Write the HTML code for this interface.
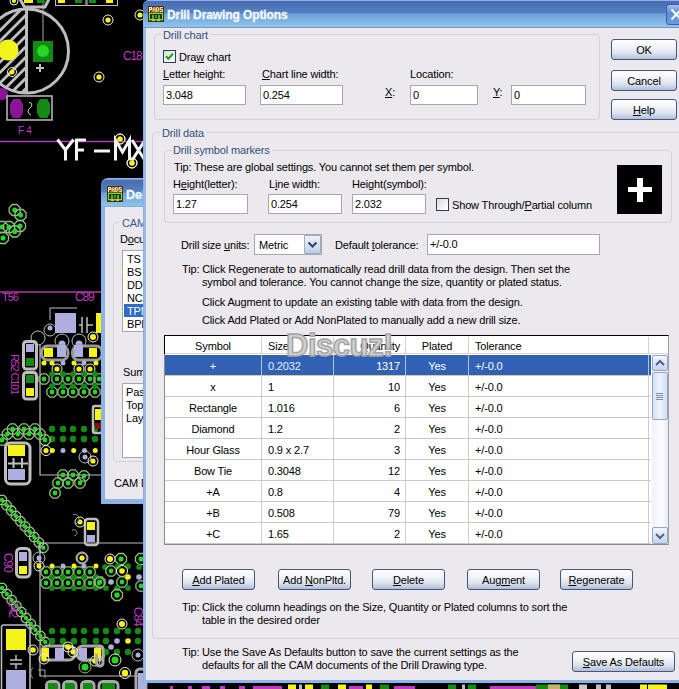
<!DOCTYPE html><html><head><meta charset="utf-8"><style>
*{margin:0;padding:0;box-sizing:content-box}
html,body{width:679px;height:689px;overflow:hidden;background:#000}
body{position:relative;font-family:"Liberation Sans",sans-serif}
.t{position:absolute;font-size:11px;line-height:13px;letter-spacing:-0.15px;white-space:nowrap;color:#000}
.t u{text-decoration:underline;text-underline-offset:1px}
.ed{position:absolute;background:#fff;border:1px solid #A7A6AA}
.btn{position:absolute;border:1px solid #44587E;border-radius:3px;background:linear-gradient(#FFFFFF 0%,#F6F7FA 30%,#DCE2EE 70%,#AFBDD8 100%)}
.bt{text-align:center}
.grp{position:absolute;border:1px solid #D3D1D7;border-radius:4px}
.glab{background:#EBE9ED;color:#34507E}

.icon{position:absolute;width:16px;height:16px;background:#8A5A1A;border-radius:1px}
.icon::before{content:"PADS";position:absolute;left:0;top:0;width:16px;font:bold 6px/7px 'Liberation Sans';color:#FFE9A8;text-align:center;letter-spacing:-0.3px}
.icon::after{content:"";position:absolute;left:2px;top:8px;width:12px;height:6px;background:#3FA03F;border:0 solid #1E5F1E}
</style></head><body>
<svg style="position:absolute;left:0;top:0" width="679" height="689"><defs><clipPath id="lh"><rect x="-20" y="0" width="46" height="100"/></clipPath><clipPath id="circ"><circle cx="26.5" cy="51" r="42"/></clipPath></defs><g clip-path="url(#circ)"><g clip-path="url(#lh)"><path d="M-20,50.5 L40,-9.5 M-20,61 L40,1 M-20,71.5 L40,11.5 M-20,82 L40,22 M-20,92.5 L40,32.5 M-20,103 L40,43 M-20,113.5 L40,53.5 M-20,124 L40,64 M-20,134.5 L40,74.5 M-20,145 L40,85 " stroke="#BEBEBE" stroke-width="3"/></g></g><circle cx="26.5" cy="51" r="42" fill="none" stroke="#BEBEBE" stroke-width="3"/><path d="M26.5,6 L26.5,94" stroke="#BEBEBE" stroke-width="3" fill="none"/><circle cx="8" cy="50" r="10.5" fill="#F4F41A"/><circle cx="12" cy="72" r="4.5" fill="none" stroke="#F2F2CC" stroke-width="1"/><circle cx="12" cy="72" r="2.5" fill="#F4F41A"/><rect x="33" y="41" width="20" height="21" rx="0" fill="#138A13"/><circle cx="43" cy="51" r="6" fill="#22D822"/><path d="M36,68 L44,68 M40,64 L40,72" stroke="#BEBEBE" stroke-width="2" fill="none"/><path d="M43,3 L43,41" stroke="#A8A8A8" stroke-width="1" fill="none"/><path d="M20,-1 L24.5,7 L45,7 L49,-1" stroke="#BEBEBE" stroke-width="3" fill="none"/><rect x="24" y="0" width="9" height="3" rx="0" fill="#F4F41A"/><rect x="37" y="0" width="8" height="3" rx="0" fill="#138A13"/><circle cx="14" cy="1" r="4" fill="none" stroke="#F2F2CC" stroke-width="1"/><circle cx="14" cy="1" r="2" fill="#F4F41A"/><rect x="55.5" y="-1" width="30.5" height="6.5" rx="0" fill="none" stroke="#BEBEBE" stroke-width="1"/><rect x="87" y="-1" width="30.5" height="6.5" rx="0" fill="none" stroke="#BEBEBE" stroke-width="1"/><rect x="58" y="0" width="7" height="3" rx="0" fill="#F4F41A"/><rect x="75" y="0" width="7" height="3" rx="0" fill="#138A13"/><rect x="89" y="0" width="7" height="3" rx="0" fill="#138A13"/><rect x="106" y="0" width="7" height="3" rx="0" fill="#F4F41A"/><circle cx="108" cy="20" r="5" fill="none" stroke="#F2F2CC" stroke-width="1"/><circle cx="108" cy="20" r="2.6" fill="#F4F41A"/><circle cx="140" cy="15" r="5" fill="none" stroke="#F2F2CC" stroke-width="1"/><circle cx="140" cy="15" r="2.6" fill="#F4F41A"/><circle cx="99" cy="77" r="5" fill="none" stroke="#F2F2CC" stroke-width="1"/><circle cx="99" cy="77" r="2.6" fill="#F4F41A"/><circle cx="120" cy="139" r="5" fill="none" stroke="#F2F2CC" stroke-width="1"/><circle cx="120" cy="139" r="2.6" fill="#F4F41A"/><circle cx="132" cy="163" r="5" fill="none" stroke="#F2F2CC" stroke-width="1"/><circle cx="132" cy="163" r="2.6" fill="#F4F41A"/><circle cx="2" cy="94" r="6" fill="#8C1496"/><rect x="7" y="96" width="45" height="24" rx="0" fill="none" stroke="#BEBEBE" stroke-width="1.5"/><polygon points="13,99 20,99 23,104 23,113 20,118 13,118 10,113 10,104" fill="#8C1496"/><polygon points="40,99 47,99 50,104 50,113 47,118 40,118 37,104 37,113" fill="#138A13"/><polygon points="40,99 47,99 50,104 50,113 47,118 40,118 37,113 37,104" fill="#138A13"/><path d="M29,103 C32,101 33,106 30,108 C27,110 28,114 31,115" stroke="#E0E0E0" stroke-width="1" fill="none"/><text x="18" y="134" fill="#C238C2" font-family="Liberation Sans" font-size="10" letter-spacing="-0.3">F 4</text><text x="123" y="60" fill="#C238C2" font-family="Liberation Sans" font-size="12" letter-spacing="-1.2">C18</text><path d="M0,141.5 L143,141.5" stroke="#B23AB2" stroke-width="1.5" fill="none"/><path d="M57.5,139.5 L65.5,150 L73.5,139.5 M65.5,150 L65.5,160.5 M76.5,160.5 L76.5,140 L86,140 M76.5,150 L84,150 M94,151 L110,151 M115.5,160.5 L115.5,140 L122.5,152 L129.5,140 L129.5,160.5 M132,140 L145,160.5 M145,140 L132,160.5" stroke="#F4F4F4" stroke-width="3" fill="none"/><circle cx="120" cy="139" r="5" fill="none" stroke="#F2F2CC" stroke-width="1"/><circle cx="120" cy="139" r="2.6" fill="#F4F41A"/><circle cx="132" cy="163" r="5" fill="none" stroke="#F2F2CC" stroke-width="1"/><circle cx="132" cy="163" r="2.6" fill="#F4F41A"/><polygon points="20.2,212.3 17.0,215.5 12.4,215.5 9.2,212.3 9.2,207.7 12.4,204.5 17.0,204.5 20.2,207.7" fill="none" stroke="#8FC27F" stroke-width="1.3"/><circle cx="14.7" cy="210" r="2.55" fill="#22D822"/><polygon points="26.1,217.3 22.9,220.5 18.3,220.5 15.1,217.3 15.1,212.7 18.3,209.5 22.9,209.5 26.1,212.7" fill="none" stroke="#8FC27F" stroke-width="1.3"/><circle cx="20.6" cy="215" r="2.55" fill="#22D822"/><polygon points="7.5,229.3 4.3,232.5 -0.3,232.5 -3.5,229.3 -3.5,224.7 -0.3,221.5 4.3,221.5 7.5,224.7" fill="none" stroke="#8FC27F" stroke-width="1.3"/><circle cx="2" cy="227" r="2.55" fill="#22D822"/><polygon points="14.5,229.3 11.3,232.5 6.7,232.5 3.5,229.3 3.5,224.7 6.7,221.5 11.3,221.5 14.5,224.7" fill="none" stroke="#8FC27F" stroke-width="1.3"/><circle cx="9" cy="227" r="2.55" fill="#22D822"/><polygon points="25.5,228.3 22.3,231.5 17.7,231.5 14.5,228.3 14.5,223.7 17.7,220.5 22.3,220.5 25.5,223.7" fill="none" stroke="#8FC27F" stroke-width="1.3"/><circle cx="20" cy="226" r="2.55" fill="#22D822"/><polygon points="20.2,233.8 17.0,237.0 12.4,237.0 9.2,233.8 9.2,229.2 12.4,226.0 17.0,226.0 20.2,229.2" fill="none" stroke="#8FC27F" stroke-width="1.3"/><circle cx="14.7" cy="231.5" r="2.55" fill="#22D822"/><polygon points="8.5,240.3 5.3,243.5 0.7,243.5 -2.5,240.3 -2.5,235.7 0.7,232.5 5.3,232.5 8.5,235.7" fill="none" stroke="#8FC27F" stroke-width="1.3"/><circle cx="3" cy="238" r="2.55" fill="#22D822"/><path d="M0,292 L143,292" stroke="#B23AB2" stroke-width="1.5" fill="none"/><text x="2" y="301" fill="#C238C2" font-family="Liberation Sans" font-size="11" letter-spacing="-1">T56</text><text x="75" y="301" fill="#C238C2" font-family="Liberation Sans" font-size="12" letter-spacing="-1.2">C89</text><rect x="55" y="313" width="21" height="20" rx="0" fill="#AFAFDF"/><path d="M50,320 L50,308 L77,308" stroke="#BEBEBE" stroke-width="1" fill="none"/><path d="M79,325 L82,325 M82,317 L82,333 M87,317 L87,333 M87,325 L93,325" stroke="#BEBEBE" stroke-width="1.5" fill="none"/><rect x="96" y="313" width="5" height="20" rx="0" fill="#F4F41A"/><circle cx="50" cy="330" r="6" fill="none" stroke="#BEBEBE" stroke-width="1"/><circle cx="50" cy="328" r="2.5" fill="#AFAFDF"/><circle cx="62" cy="341" r="7" fill="none" stroke="#BEBEBE" stroke-width="1"/><circle cx="62" cy="344" r="3.5" fill="#AFAFDF"/><circle cx="79" cy="341" r="7" fill="none" stroke="#BEBEBE" stroke-width="1"/><circle cx="79" cy="344" r="3.5" fill="#AFAFDF"/><circle cx="38" cy="338" r="7" fill="none" stroke="#BEBEBE" stroke-width="1"/><circle cx="93" cy="337" r="5" fill="none" stroke="#F2F2CC" stroke-width="1"/><circle cx="93" cy="337" r="3" fill="#F4F41A"/><rect x="23.5" y="341.5" width="13.0" height="27.5" rx="3" fill="none" stroke="#BEBEBE" stroke-width="3"/><rect x="26" y="344" width="8" height="8" rx="0" fill="#AFAFDF"/><rect x="26" y="358" width="8" height="8" rx="0" fill="#138A13"/><rect x="23.5" y="372.5" width="13.0" height="26.5" rx="3" fill="none" stroke="#BEBEBE" stroke-width="3"/><rect x="26" y="375" width="8" height="8" rx="0" fill="#138A13"/><rect x="26" y="388" width="8" height="8" rx="0" fill="#F4F41A"/><rect x="41.5" y="346" width="26.5" height="14" rx="6" fill="none" stroke="#989898" stroke-width="3"/><rect x="44" y="348" width="9" height="9" rx="0" fill="#F4F41A"/><rect x="57" y="345" width="9" height="12" rx="0" fill="#AFAFDF"/><rect x="72.5" y="346" width="29.5" height="14" rx="6" fill="none" stroke="#989898" stroke-width="3"/><rect x="74" y="345" width="9" height="12" rx="0" fill="#AFAFDF"/><rect x="89" y="348" width="8" height="9" rx="0" fill="#F4F41A"/><circle cx="44" cy="363" r="2.5" fill="#F4F41A"/><circle cx="52" cy="363" r="2.5" fill="#F4F41A"/><circle cx="74" cy="363" r="2.5" fill="#F4F41A"/><circle cx="96" cy="363" r="2.5" fill="#F4F41A"/><circle cx="63" cy="363" r="2.5" fill="#AFAFDF"/><circle cx="84" cy="363" r="2.5" fill="#AFAFDF"/><circle cx="57" cy="369" r="5" fill="none" stroke="#F2F2CC" stroke-width="1"/><circle cx="57" cy="369" r="2.6" fill="#F4F41A"/><circle cx="79" cy="369" r="5" fill="none" stroke="#F2F2CC" stroke-width="1"/><circle cx="79" cy="369" r="2.6" fill="#F4F41A"/><circle cx="90" cy="369" r="5" fill="none" stroke="#F2F2CC" stroke-width="1"/><circle cx="90" cy="369" r="2.6" fill="#F4F41A"/><path d="M40,345 L40,475 L143,475" stroke="#BEBEBE" stroke-width="1.2" fill="none"/><polygon points="49.1,381.1 46.1,384.1 41.9,384.1 38.9,381.1 38.9,376.9 41.9,373.9 46.1,373.9 49.1,376.9" fill="none" stroke="#8FC27F" stroke-width="1.3"/><circle cx="44" cy="379" r="2.38" fill="#22D822"/><polygon points="62.1,381.1 59.1,384.1 54.9,384.1 51.9,381.1 51.9,376.9 54.9,373.9 59.1,373.9 62.1,376.9" fill="none" stroke="#8FC27F" stroke-width="1.3"/><circle cx="57" cy="379" r="2.38" fill="#22D822"/><polygon points="73.1,381.1 70.1,384.1 65.9,384.1 62.9,381.1 62.9,376.9 65.9,373.9 70.1,373.9 73.1,376.9" fill="none" stroke="#8FC27F" stroke-width="1.3"/><circle cx="68" cy="379" r="2.38" fill="#22D822"/><polygon points="84.1,381.1 81.1,384.1 76.9,384.1 73.9,381.1 73.9,376.9 76.9,373.9 81.1,373.9 84.1,376.9" fill="none" stroke="#8FC27F" stroke-width="1.3"/><circle cx="79" cy="379" r="2.38" fill="#22D822"/><polygon points="95.1,381.1 92.1,384.1 87.9,384.1 84.9,381.1 84.9,376.9 87.9,373.9 92.1,373.9 95.1,376.9" fill="none" stroke="#8FC27F" stroke-width="1.3"/><circle cx="90" cy="379" r="2.38" fill="#22D822"/><polygon points="104.1,381.1 101.1,384.1 96.9,384.1 93.9,381.1 93.9,376.9 96.9,373.9 101.1,373.9 104.1,376.9" fill="none" stroke="#8FC27F" stroke-width="1.3"/><circle cx="99" cy="379" r="2.38" fill="#22D822"/><polygon points="57.1,394.1 54.1,397.1 49.9,397.1 46.9,394.1 46.9,389.9 49.9,386.9 54.1,386.9 57.1,389.9" fill="none" stroke="#8FC27F" stroke-width="1.3"/><circle cx="52" cy="392" r="2.38" fill="#22D822"/><polygon points="68.1,394.1 65.1,397.1 60.9,397.1 57.9,394.1 57.9,389.9 60.9,386.9 65.1,386.9 68.1,389.9" fill="none" stroke="#8FC27F" stroke-width="1.3"/><circle cx="63" cy="392" r="2.38" fill="#22D822"/><polygon points="78.1,394.1 75.1,397.1 70.9,397.1 67.9,394.1 67.9,389.9 70.9,386.9 75.1,386.9 78.1,389.9" fill="none" stroke="#8FC27F" stroke-width="1.3"/><circle cx="73" cy="392" r="2.38" fill="#22D822"/><polygon points="89.1,394.1 86.1,397.1 81.9,397.1 78.9,394.1 78.9,389.9 81.9,386.9 86.1,386.9 89.1,389.9" fill="none" stroke="#8FC27F" stroke-width="1.3"/><circle cx="84" cy="392" r="2.38" fill="#22D822"/><polygon points="100.1,394.1 97.1,397.1 92.9,397.1 89.9,394.1 89.9,389.9 92.9,386.9 97.1,386.9 100.1,389.9" fill="none" stroke="#8FC27F" stroke-width="1.3"/><circle cx="95" cy="392" r="2.38" fill="#22D822"/><circle cx="52" cy="374" r="2.875" fill="#138A13"/><circle cx="52" cy="386" r="2.875" fill="#138A13"/><circle cx="63" cy="374" r="2.875" fill="#138A13"/><circle cx="63" cy="386" r="2.875" fill="#138A13"/><circle cx="73" cy="374" r="2.875" fill="#138A13"/><circle cx="73" cy="386" r="2.875" fill="#138A13"/><circle cx="84" cy="374" r="2.875" fill="#138A13"/><circle cx="84" cy="386" r="2.875" fill="#138A13"/><circle cx="95" cy="374" r="2.875" fill="#138A13"/><circle cx="95" cy="386" r="2.875" fill="#138A13"/><circle cx="52" cy="429" r="3.2199999999999998" fill="#138A13"/><circle cx="52" cy="439" r="3.2199999999999998" fill="#138A13"/><circle cx="63" cy="429" r="3.2199999999999998" fill="#138A13"/><circle cx="63" cy="439" r="3.2199999999999998" fill="#138A13"/><circle cx="73" cy="429" r="3.2199999999999998" fill="#138A13"/><circle cx="73" cy="439" r="3.2199999999999998" fill="#138A13"/><circle cx="84" cy="429" r="3.2199999999999998" fill="#138A13"/><circle cx="84" cy="439" r="3.2199999999999998" fill="#138A13"/><circle cx="95" cy="429" r="3.2199999999999998" fill="#138A13"/><circle cx="95" cy="439" r="3.2199999999999998" fill="#138A13"/><text x="11" y="354" fill="#C238C2" font-family="Liberation Sans" font-size="11" transform="rotate(90 11 354)" letter-spacing="-1.2">R52 C101</text><rect x="93" y="406" width="9" height="27" rx="2" fill="none" stroke="#BEBEBE" stroke-width="2.5"/><rect x="95" y="409" width="6" height="11" rx="0" fill="#F4F41A"/><rect x="95" y="423" width="6" height="6" rx="0" fill="#8A1010"/><polygon points="7.1,442.1 4.1,445.1 -0.1,445.1 -3.1,442.1 -3.1,437.9 -0.1,434.9 4.1,434.9 7.1,437.9" fill="none" stroke="#8FC27F" stroke-width="1.3"/><circle cx="2" cy="440" r="2.38" fill="#22D822"/><polygon points="12.5,436.1 9.5,439.1 5.3,439.1 2.3,436.1 2.3,431.9 5.3,428.9 9.5,428.9 12.5,431.9" fill="none" stroke="#8FC27F" stroke-width="1.3"/><circle cx="7.4" cy="434" r="2.38" fill="#22D822"/><polygon points="17.7,431.1 14.7,434.1 10.5,434.1 7.5,431.1 7.5,426.9 10.5,423.9 14.7,423.9 17.7,426.9" fill="none" stroke="#8FC27F" stroke-width="1.3"/><circle cx="12.6" cy="429" r="2.38" fill="#22D822"/><polygon points="23.0,436.1 20.0,439.1 15.8,439.1 12.8,436.1 12.8,431.9 15.8,428.9 20.0,428.9 23.0,431.9" fill="none" stroke="#8FC27F" stroke-width="1.3"/><circle cx="17.9" cy="434" r="2.38" fill="#22D822"/><polygon points="29.1,431.1 26.1,434.1 21.9,434.1 18.9,431.1 18.9,426.9 21.9,423.9 26.1,423.9 29.1,426.9" fill="none" stroke="#8FC27F" stroke-width="1.3"/><circle cx="24" cy="429" r="2.38" fill="#22D822"/><polygon points="34.1,436.1 31.1,439.1 26.9,439.1 23.9,436.1 23.9,431.9 26.9,428.9 31.1,428.9 34.1,431.9" fill="none" stroke="#8FC27F" stroke-width="1.3"/><circle cx="29" cy="434" r="2.38" fill="#22D822"/><polygon points="40.1,431.1 37.1,434.1 32.9,434.1 29.9,431.1 29.9,426.9 32.9,423.9 37.1,423.9 40.1,426.9" fill="none" stroke="#8FC27F" stroke-width="1.3"/><circle cx="35" cy="429" r="2.38" fill="#22D822"/><polygon points="45.1,436.1 42.1,439.1 37.9,439.1 34.9,436.1 34.9,431.9 37.9,428.9 42.1,428.9 45.1,431.9" fill="none" stroke="#8FC27F" stroke-width="1.3"/><circle cx="40" cy="434" r="2.38" fill="#22D822"/><polygon points="50.1,442.1 47.1,445.1 42.9,445.1 39.9,442.1 39.9,437.9 42.9,434.9 47.1,434.9 50.1,437.9" fill="none" stroke="#8FC27F" stroke-width="1.3"/><circle cx="45" cy="440" r="2.38" fill="#22D822"/><circle cx="46" cy="450.5" r="5" fill="none" stroke="#F2F2CC" stroke-width="1"/><circle cx="46" cy="450.5" r="2.6" fill="#F4F41A"/><circle cx="52.4" cy="450.5" r="2.5" fill="#F4F41A"/><circle cx="63" cy="450.5" r="2.5" fill="#AFAFDF"/><circle cx="73.7" cy="450.5" r="2.5" fill="#F4F41A"/><circle cx="84.5" cy="450.5" r="2.5" fill="#AFAFDF"/><circle cx="95.2" cy="450.5" r="2.5" fill="#F4F41A"/><circle cx="85" cy="457" r="6" fill="none" stroke="#BEBEBE" stroke-width="1"/><circle cx="85" cy="457" r="2.5" fill="#AFAFDF"/><circle cx="93" cy="461" r="5" fill="none" stroke="#F2F2CC" stroke-width="1"/><circle cx="93" cy="461" r="2.6" fill="#F4F41A"/><rect x="5.5" y="443" width="24.5" height="41" rx="5" fill="none" stroke="#BEBEBE" stroke-width="3"/><rect x="8" y="445" width="17" height="11" rx="0" fill="#F4F41A"/><rect x="8" y="469" width="17" height="11" rx="0" fill="#AFAFDF"/><path d="M13.5,458 L13.5,468 M22,458 L22,468 M8,463.5 L28,463.5" stroke="#BEBEBE" stroke-width="2" fill="none"/><polygon points="68.1,477.1 65.1,480.1 60.9,480.1 57.9,477.1 57.9,472.9 60.9,469.9 65.1,469.9 68.1,472.9" fill="none" stroke="#8FC27F" stroke-width="1.3"/><circle cx="63" cy="475" r="2.38" fill="#22D822"/><polygon points="78.1,477.1 75.1,480.1 70.9,480.1 67.9,477.1 67.9,472.9 70.9,469.9 75.1,469.9 78.1,472.9" fill="none" stroke="#8FC27F" stroke-width="1.3"/><circle cx="73" cy="475" r="2.38" fill="#22D822"/><polygon points="89.1,478.1 86.1,481.1 81.9,481.1 78.9,478.1 78.9,473.9 81.9,470.9 86.1,470.9 89.1,473.9" fill="none" stroke="#8FC27F" stroke-width="1.3"/><circle cx="84" cy="476" r="2.38" fill="#22D822"/><polygon points="63.1,485.1 60.1,488.1 55.9,488.1 52.9,485.1 52.9,480.9 55.9,477.9 60.1,477.9 63.1,480.9" fill="none" stroke="#8FC27F" stroke-width="1.3"/><circle cx="58" cy="483" r="2.38" fill="#22D822"/><polygon points="73.1,485.1 70.1,488.1 65.9,488.1 62.9,485.1 62.9,480.9 65.9,477.9 70.1,477.9 73.1,480.9" fill="none" stroke="#8FC27F" stroke-width="1.3"/><circle cx="68" cy="483" r="2.38" fill="#22D822"/><polygon points="85.1,485.1 82.1,488.1 77.9,488.1 74.9,485.1 74.9,480.9 77.9,477.9 82.1,477.9 85.1,480.9" fill="none" stroke="#8FC27F" stroke-width="1.3"/><circle cx="80" cy="483" r="2.38" fill="#22D822"/><polygon points="60.1,495.1 57.1,498.1 52.9,498.1 49.9,495.1 49.9,490.9 52.9,487.9 57.1,487.9 60.1,490.9" fill="none" stroke="#8FC27F" stroke-width="1.3"/><circle cx="55" cy="493" r="2.38" fill="#22D822"/><polygon points="6.6,501.9 3.9,504.6 0.1,504.6 -2.6,501.9 -2.6,498.1 0.1,495.4 3.9,495.4 6.6,498.1" fill="none" stroke="#8FC27F" stroke-width="1.3"/><circle cx="2.0" cy="500.0" r="2.21" fill="#22D822"/><polygon points="11.2,507.2 8.5,509.9 4.7,509.9 2.0,507.2 2.0,503.4 4.7,500.7 8.5,500.7 11.2,503.4" fill="none" stroke="#8FC27F" stroke-width="1.3"/><circle cx="6.6" cy="505.3" r="2.21" fill="#22D822"/><polygon points="15.8,512.5 13.1,515.2 9.3,515.2 6.6,512.5 6.6,508.7 9.3,506.0 13.1,506.0 15.8,508.7" fill="none" stroke="#8FC27F" stroke-width="1.3"/><circle cx="11.2" cy="510.6" r="2.21" fill="#22D822"/><polygon points="20.4,517.8 17.7,520.5 13.9,520.5 11.2,517.8 11.2,514.0 13.9,511.3 17.7,511.3 20.4,514.0" fill="none" stroke="#8FC27F" stroke-width="1.3"/><circle cx="15.799999999999999" cy="515.9" r="2.21" fill="#22D822"/><polygon points="25.0,523.1 22.3,525.8 18.5,525.8 15.8,523.1 15.8,519.3 18.5,516.6 22.3,516.6 25.0,519.3" fill="none" stroke="#8FC27F" stroke-width="1.3"/><circle cx="20.4" cy="521.2" r="2.21" fill="#22D822"/><polygon points="29.6,528.4 26.9,531.1 23.1,531.1 20.4,528.4 20.4,524.6 23.1,521.9 26.9,521.9 29.6,524.6" fill="none" stroke="#8FC27F" stroke-width="1.3"/><circle cx="25.0" cy="526.5" r="2.21" fill="#22D822"/><polygon points="34.2,533.7 31.5,536.4 27.7,536.4 25.0,533.7 25.0,529.9 27.7,527.2 31.5,527.2 34.2,529.9" fill="none" stroke="#8FC27F" stroke-width="1.3"/><circle cx="29.599999999999998" cy="531.8" r="2.21" fill="#22D822"/><polygon points="38.8,539.0 36.1,541.7 32.3,541.7 29.6,539.0 29.6,535.2 32.3,532.5 36.1,532.5 38.8,535.2" fill="none" stroke="#8FC27F" stroke-width="1.3"/><circle cx="34.199999999999996" cy="537.1" r="2.21" fill="#22D822"/><polygon points="43.4,544.3 40.7,547.0 36.9,547.0 34.2,544.3 34.2,540.5 36.9,537.8 40.7,537.8 43.4,540.5" fill="none" stroke="#8FC27F" stroke-width="1.3"/><circle cx="38.8" cy="542.4" r="2.21" fill="#22D822"/><polygon points="48.0,549.6 45.3,552.3 41.5,552.3 38.8,549.6 38.8,545.8 41.5,543.1 45.3,543.1 48.0,545.8" fill="none" stroke="#8FC27F" stroke-width="1.3"/><circle cx="43.4" cy="547.7" r="2.21" fill="#22D822"/><rect x="85" y="519" width="13" height="26" rx="3" fill="none" stroke="#BEBEBE" stroke-width="2.5"/><rect x="87" y="522" width="8" height="8" rx="0" fill="#F4F41A"/><rect x="87" y="535" width="8" height="7" rx="0" fill="#AFAFDF"/><circle cx="80" cy="522" r="5" fill="none" stroke="#F2F2CC" stroke-width="1"/><circle cx="80" cy="522" r="2.5" fill="#F4F41A"/><path d="M73,515 C78,512 82,520 76,524 M72,530 C76,528 80,534 74,536" stroke="#9A9A9A" stroke-width="1" fill="none"/><path d="M40,543 L143,543" stroke="#BEBEBE" stroke-width="1.2" fill="none"/><rect x="16.5" y="548.5" width="13.5" height="28.5" rx="4" fill="none" stroke="#BEBEBE" stroke-width="3"/><rect x="19" y="552" width="8" height="9" rx="0" fill="#AFAFDF"/><rect x="19" y="566" width="8" height="8" rx="0" fill="#F4F41A"/><text x="4" y="553" fill="#C238C2" font-family="Liberation Sans" font-size="12" transform="rotate(90 4 553)" letter-spacing="-1.2">C90</text><path d="M40,543 L40,676 L143,676" stroke="#BEBEBE" stroke-width="1.2" fill="none"/><circle cx="39" cy="558" r="6" fill="none" stroke="#BEBEBE" stroke-width="1"/><circle cx="39" cy="558" r="2.5" fill="#AFAFDF"/><circle cx="39" cy="566" r="5" fill="none" stroke="#F2F2CC" stroke-width="1"/><circle cx="39" cy="566" r="2.5" fill="#F4F41A"/><circle cx="82" cy="558" r="6" fill="none" stroke="#BEBEBE" stroke-width="1"/><circle cx="82" cy="558" r="2.5" fill="#AFAFDF"/><circle cx="82" cy="558" r="5" fill="none" stroke="#F2F2CC" stroke-width="1"/><circle cx="82" cy="558" r="2.5" fill="#F4F41A"/><circle cx="52" cy="566" r="2.5" fill="#F4F41A"/><circle cx="74" cy="566" r="2.5" fill="#F4F41A"/><circle cx="96" cy="566" r="2.5" fill="#F4F41A"/><circle cx="63" cy="566" r="2.5" fill="#AFAFDF"/><circle cx="84" cy="566" r="2.5" fill="#AFAFDF"/><polygon points="51.1,574.1 48.1,577.1 43.9,577.1 40.9,574.1 40.9,569.9 43.9,566.9 48.1,566.9 51.1,569.9" fill="none" stroke="#8FC27F" stroke-width="1.3"/><circle cx="46" cy="572" r="2.38" fill="#22D822"/><polygon points="62.1,574.1 59.1,577.1 54.9,577.1 51.9,574.1 51.9,569.9 54.9,566.9 59.1,566.9 62.1,569.9" fill="none" stroke="#8FC27F" stroke-width="1.3"/><circle cx="57" cy="572" r="2.38" fill="#22D822"/><polygon points="73.1,574.1 70.1,577.1 65.9,577.1 62.9,574.1 62.9,569.9 65.9,566.9 70.1,566.9 73.1,569.9" fill="none" stroke="#8FC27F" stroke-width="1.3"/><circle cx="68" cy="572" r="2.38" fill="#22D822"/><polygon points="84.1,574.1 81.1,577.1 76.9,577.1 73.9,574.1 73.9,569.9 76.9,566.9 81.1,566.9 84.1,569.9" fill="none" stroke="#8FC27F" stroke-width="1.3"/><circle cx="79" cy="572" r="2.38" fill="#22D822"/><polygon points="95.1,574.1 92.1,577.1 87.9,577.1 84.9,574.1 84.9,569.9 87.9,566.9 92.1,566.9 95.1,569.9" fill="none" stroke="#8FC27F" stroke-width="1.3"/><circle cx="90" cy="572" r="2.38" fill="#22D822"/><polygon points="51.1,585.1 48.1,588.1 43.9,588.1 40.9,585.1 40.9,580.9 43.9,577.9 48.1,577.9 51.1,580.9" fill="none" stroke="#8FC27F" stroke-width="1.3"/><circle cx="46" cy="583" r="2.38" fill="#22D822"/><polygon points="62.1,585.1 59.1,588.1 54.9,588.1 51.9,585.1 51.9,580.9 54.9,577.9 59.1,577.9 62.1,580.9" fill="none" stroke="#8FC27F" stroke-width="1.3"/><circle cx="57" cy="583" r="2.38" fill="#22D822"/><polygon points="73.1,585.1 70.1,588.1 65.9,588.1 62.9,585.1 62.9,580.9 65.9,577.9 70.1,577.9 73.1,580.9" fill="none" stroke="#8FC27F" stroke-width="1.3"/><circle cx="68" cy="583" r="2.38" fill="#22D822"/><polygon points="84.1,585.1 81.1,588.1 76.9,588.1 73.9,585.1 73.9,580.9 76.9,577.9 81.1,577.9 84.1,580.9" fill="none" stroke="#8FC27F" stroke-width="1.3"/><circle cx="79" cy="583" r="2.38" fill="#22D822"/><polygon points="95.1,585.1 92.1,588.1 87.9,588.1 84.9,585.1 84.9,580.9 87.9,577.9 92.1,577.9 95.1,580.9" fill="none" stroke="#8FC27F" stroke-width="1.3"/><circle cx="90" cy="583" r="2.38" fill="#22D822"/><polygon points="104.1,585.1 101.1,588.1 96.9,588.1 93.9,585.1 93.9,580.9 96.9,577.9 101.1,577.9 104.1,580.9" fill="none" stroke="#8FC27F" stroke-width="1.3"/><circle cx="99" cy="583" r="2.38" fill="#22D822"/><circle cx="52" cy="577" r="2.875" fill="#138A13"/><circle cx="52" cy="588" r="2.875" fill="#138A13"/><circle cx="63" cy="577" r="2.875" fill="#138A13"/><circle cx="63" cy="588" r="2.875" fill="#138A13"/><circle cx="74" cy="577" r="2.875" fill="#138A13"/><circle cx="74" cy="588" r="2.875" fill="#138A13"/><circle cx="84" cy="577" r="2.875" fill="#138A13"/><circle cx="84" cy="588" r="2.875" fill="#138A13"/><circle cx="96" cy="577" r="2.875" fill="#138A13"/><circle cx="96" cy="588" r="2.875" fill="#138A13"/><polygon points="6.6,589.9 3.9,592.6 0.1,592.6 -2.6,589.9 -2.6,586.1 0.1,583.4 3.9,583.4 6.6,586.1" fill="none" stroke="#8FC27F" stroke-width="1.3"/><circle cx="2.0" cy="588" r="2.21" fill="#22D822"/><polygon points="11.4,595.9 8.7,598.6 4.9,598.6 2.2,595.9 2.2,592.1 4.9,589.4 8.7,589.4 11.4,592.1" fill="none" stroke="#8FC27F" stroke-width="1.3"/><circle cx="6.8" cy="594" r="2.21" fill="#22D822"/><polygon points="16.2,601.9 13.5,604.6 9.7,604.6 7.0,601.9 7.0,598.1 9.7,595.4 13.5,595.4 16.2,598.1" fill="none" stroke="#8FC27F" stroke-width="1.3"/><circle cx="11.6" cy="600" r="2.21" fill="#22D822"/><polygon points="21.0,607.9 18.3,610.6 14.5,610.6 11.8,607.9 11.8,604.1 14.5,601.4 18.3,601.4 21.0,604.1" fill="none" stroke="#8FC27F" stroke-width="1.3"/><circle cx="16.4" cy="606" r="2.21" fill="#22D822"/><polygon points="25.8,613.9 23.1,616.6 19.3,616.6 16.6,613.9 16.6,610.1 19.3,607.4 23.1,607.4 25.8,610.1" fill="none" stroke="#8FC27F" stroke-width="1.3"/><circle cx="21.2" cy="612" r="2.21" fill="#22D822"/><polygon points="30.6,619.9 27.9,622.6 24.1,622.6 21.4,619.9 21.4,616.1 24.1,613.4 27.9,613.4 30.6,616.1" fill="none" stroke="#8FC27F" stroke-width="1.3"/><circle cx="26.0" cy="618" r="2.21" fill="#22D822"/><polygon points="35.4,625.9 32.7,628.6 28.9,628.6 26.2,625.9 26.2,622.1 28.9,619.4 32.7,619.4 35.4,622.1" fill="none" stroke="#8FC27F" stroke-width="1.3"/><circle cx="30.799999999999997" cy="624" r="2.21" fill="#22D822"/><polygon points="40.2,631.9 37.5,634.6 33.7,634.6 31.0,631.9 31.0,628.1 33.7,625.4 37.5,625.4 40.2,628.1" fill="none" stroke="#8FC27F" stroke-width="1.3"/><circle cx="35.6" cy="630" r="2.21" fill="#22D822"/><polygon points="45.0,637.9 42.3,640.6 38.5,640.6 35.8,637.9 35.8,634.1 38.5,631.4 42.3,631.4 45.0,634.1" fill="none" stroke="#8FC27F" stroke-width="1.3"/><circle cx="40.4" cy="636" r="2.21" fill="#22D822"/><polygon points="49.8,643.9 47.1,646.6 43.3,646.6 40.6,643.9 40.6,640.1 43.3,637.4 47.1,637.4 49.8,640.1" fill="none" stroke="#8FC27F" stroke-width="1.3"/><circle cx="45.199999999999996" cy="642" r="2.21" fill="#22D822"/><text x="9" y="600" fill="#C238C2" font-family="Liberation Sans" font-size="12" transform="rotate(90 9 600)" letter-spacing="-1.2">Z42</text><circle cx="52" cy="631" r="3.2199999999999998" fill="#138A13"/><circle cx="52" cy="641" r="3.2199999999999998" fill="#138A13"/><circle cx="63" cy="631" r="3.2199999999999998" fill="#138A13"/><circle cx="63" cy="641" r="3.2199999999999998" fill="#138A13"/><circle cx="74" cy="631" r="3.2199999999999998" fill="#138A13"/><circle cx="74" cy="641" r="3.2199999999999998" fill="#138A13"/><circle cx="84" cy="631" r="3.2199999999999998" fill="#138A13"/><circle cx="84" cy="641" r="3.2199999999999998" fill="#138A13"/><circle cx="96" cy="631" r="3.2199999999999998" fill="#138A13"/><circle cx="96" cy="641" r="3.2199999999999998" fill="#138A13"/><rect x="1.5" y="625" width="28.5" height="75" rx="2" fill="none" stroke="#BEBEBE" stroke-width="1.5"/><rect x="6" y="629" width="20" height="21" rx="0" fill="#F4F41A"/><rect x="6" y="670" width="20" height="30" rx="0" fill="#AFAFDF"/><path d="M16,655 L16,660 M10,660 L22,660 M10,664 L22,664 M16,664 L16,669" stroke="#BEBEBE" stroke-width="1.5" fill="none"/><rect x="41.5" y="646" width="33.5" height="14" rx="6" fill="none" stroke="#A8A8A8" stroke-width="3"/><rect x="42" y="648" width="7" height="9" rx="0" fill="#F4F41A"/><rect x="55" y="648" width="9" height="12" rx="0" fill="#AFAFDF"/><rect x="77" y="646" width="27" height="14" rx="6" fill="none" stroke="#A8A8A8" stroke-width="3"/><rect x="79" y="648" width="8" height="12" rx="0" fill="#AFAFDF"/><rect x="94" y="648" width="7" height="10" rx="0" fill="#F4F41A"/><circle cx="33" cy="650" r="5" fill="none" stroke="#F2F2CC" stroke-width="1"/><circle cx="33" cy="650" r="2.8" fill="#F4F41A"/><circle cx="44" cy="659" r="5" fill="none" stroke="#F2F2CC" stroke-width="1"/><circle cx="44" cy="659" r="2.8" fill="#F4F41A"/><circle cx="68" cy="647" r="5" fill="none" stroke="#F2F2CC" stroke-width="1"/><circle cx="68" cy="647" r="2.8" fill="#F4F41A"/><circle cx="73" cy="652" r="5" fill="none" stroke="#F2F2CC" stroke-width="1"/><circle cx="73" cy="652" r="2.5" fill="#F4F41A"/><circle cx="95" cy="661" r="5" fill="none" stroke="#F2F2CC" stroke-width="1"/><circle cx="95" cy="661" r="2.8" fill="#F4F41A"/><circle cx="85" cy="667" r="6" fill="none" stroke="#8FC27F"/><circle cx="85" cy="667" r="3.5" fill="#22D822"/><path d="M33,668 C30,668 30,678 33,678 M38,670 L45,670 L45,678" stroke="#A0A0A0" stroke-width="1" fill="none"/><rect x="46.5" y="681.5" width="12.5" height="10.5" rx="4" fill="none" stroke="#A8A8A8" stroke-width="3"/><rect x="48" y="683" width="9" height="6" rx="0" fill="#138A13"/><rect x="63.5" y="681.5" width="12.5" height="10.5" rx="4" fill="none" stroke="#A8A8A8" stroke-width="3"/><rect x="65" y="683" width="9" height="6" rx="0" fill="#138A13"/><rect x="81.5" y="681.5" width="12.5" height="10.5" rx="4" fill="none" stroke="#A8A8A8" stroke-width="3"/><rect x="83" y="683" width="9" height="6" rx="0" fill="#138A13"/><circle cx="110" cy="559" r="5" fill="none" stroke="#F2F2CC" stroke-width="1"/><circle cx="110" cy="559" r="3" fill="#F4F41A"/><polygon points="126.5,561.3 123.3,564.5 118.7,564.5 115.5,561.3 115.5,556.7 118.7,553.5 123.3,553.5 126.5,556.7" fill="none" stroke="#8FC27F" stroke-width="1.3"/><circle cx="121" cy="559" r="2.55" fill="#22D822"/><polygon points="146.5,561.3 143.3,564.5 138.7,564.5 135.5,561.3 135.5,556.7 138.7,553.5 143.3,553.5 146.5,556.7" fill="none" stroke="#8FC27F" stroke-width="1.3"/><circle cx="141" cy="559" r="2.55" fill="#22D822"/><circle cx="105" cy="567" r="2.875" fill="#138A13"/><circle cx="118" cy="566" r="2.875" fill="#138A13"/><circle cx="128" cy="566" r="2.875" fill="#138A13"/><circle cx="139" cy="567" r="2.875" fill="#138A13"/><polygon points="116.1,573.1 113.1,576.1 108.9,576.1 105.9,573.1 105.9,568.9 108.9,565.9 113.1,565.9 116.1,568.9" fill="none" stroke="#8FC27F" stroke-width="1.3"/><circle cx="111" cy="571" r="2.38" fill="#22D822"/><circle cx="122" cy="571" r="5.5" fill="none" stroke="#F2F2CC" stroke-width="1"/><circle cx="122" cy="571" r="2.8" fill="#F4F41A"/><polygon points="105.1,584.1 102.1,587.1 97.9,587.1 94.9,584.1 94.9,579.9 97.9,576.9 102.1,576.9 105.1,579.9" fill="none" stroke="#8FC27F" stroke-width="1.3"/><circle cx="100" cy="582" r="2.38" fill="#22D822"/><circle cx="111" cy="582" r="2.8" fill="#AFAFDF"/><polygon points="127.1,584.1 124.1,587.1 119.9,587.1 116.9,584.1 116.9,579.9 119.9,576.9 124.1,576.9 127.1,579.9" fill="none" stroke="#8FC27F" stroke-width="1.3"/><circle cx="122" cy="582" r="2.38" fill="#22D822"/><circle cx="128" cy="577" r="2.8" fill="#F4F41A"/><circle cx="139" cy="577" r="2.8" fill="#AFAFDF"/><polygon points="146.1,588.1 143.1,591.1 138.9,591.1 135.9,588.1 135.9,583.9 138.9,580.9 143.1,580.9 146.1,583.9" fill="none" stroke="#8FC27F" stroke-width="1.3"/><circle cx="141" cy="586" r="2.38" fill="#22D822"/><circle cx="106" cy="588" r="2.875" fill="#138A13"/><circle cx="117" cy="588" r="2.875" fill="#138A13"/><circle cx="128" cy="588" r="2.875" fill="#138A13"/><polygon points="122.5,597.3 119.3,600.5 114.7,600.5 111.5,597.3 111.5,592.7 114.7,589.5 119.3,589.5 122.5,592.7" fill="none" stroke="#8FC27F" stroke-width="1.3"/><circle cx="117" cy="595" r="2.72" fill="#22D822"/><text x="134" y="607" fill="#C238C2" font-family="Liberation Sans" font-size="12" transform="rotate(90 134 607)" letter-spacing="-1.2">C84</text><circle cx="122" cy="624" r="5" fill="none" stroke="#F2F2CC" stroke-width="1"/><circle cx="122" cy="624" r="3" fill="#F4F41A"/><circle cx="106" cy="631" r="3.2199999999999998" fill="#138A13"/><circle cx="117" cy="631" r="3.2199999999999998" fill="#138A13"/><circle cx="128" cy="631" r="3.2199999999999998" fill="#138A13"/><circle cx="138" cy="631" r="3.2199999999999998" fill="#138A13"/><circle cx="117" cy="641" r="2.8" fill="#AFAFDF"/><circle cx="128" cy="641" r="2.8" fill="#F4F41A"/><circle cx="106" cy="641" r="3.2199999999999998" fill="#138A13"/><circle cx="138" cy="641" r="3.2199999999999998" fill="#138A13"/><circle cx="111" cy="647" r="2.8" fill="#AFAFDF"/><circle cx="106" cy="652" r="3.2199999999999998" fill="#138A13"/><circle cx="117" cy="652" r="3.2199999999999998" fill="#138A13"/><circle cx="128" cy="652" r="3.2199999999999998" fill="#138A13"/><circle cx="115" cy="660" r="6" fill="none" stroke="#F2F2CC"/><circle cx="115" cy="660" r="3.5" fill="#22D822"/><circle cx="125" cy="673" r="5.5" fill="none" stroke="#F2F2CC" stroke-width="1"/><circle cx="125" cy="673" r="3.2" fill="#F4F41A"/><rect x="96.5" y="646" width="6.5" height="20" rx="3" fill="none" stroke="#A8A8A8" stroke-width="3"/><circle cx="97" cy="651" r="3" fill="#F4F41A"/><rect x="99" y="681.5" width="19" height="10.5" rx="4" fill="none" stroke="#A8A8A8" stroke-width="3"/><rect x="102" y="683" width="13" height="6" rx="0" fill="#138A13"/><rect x="136" y="669" width="10" height="23" rx="4" fill="none" stroke="#A8A8A8" stroke-width="3"/><rect x="138" y="673" width="8" height="16" rx="0" fill="#AFAFDF"/><circle cx="138" cy="655" r="6" fill="none" stroke="#BEBEBE" stroke-width="1"/><circle cx="138" cy="655" r="2.5" fill="#AFAFDF"/><rect x="170" y="686" width="3" height="3" rx="0" fill="#C238C2"/><rect x="188" y="686" width="4" height="3" rx="0" fill="#C238C2"/><rect x="202" y="686" width="8" height="3" rx="0" fill="#C238C2"/><rect x="220" y="686" width="5" height="3" rx="0" fill="#C238C2"/><rect x="239" y="686" width="6" height="3" rx="0" fill="#C238C2"/><rect x="253" y="686" width="27" height="3" rx="0" fill="#C238C2"/><rect x="270" y="686" width="12" height="3" rx="0" fill="#C238C2"/><rect x="349" y="686" width="14" height="3" rx="0" fill="#C238C2"/><rect x="394" y="686" width="21" height="3" rx="0" fill="#C238C2"/><rect x="490" y="686" width="46" height="3" rx="0" fill="#C238C2"/><rect x="288" y="684.5" width="8" height="4.5" rx="0" fill="#F4F41A"/><rect x="299" y="684.5" width="3" height="4.5" rx="0" fill="#BEBEBE"/><rect x="305" y="684.5" width="8" height="4.5" rx="0" fill="#F4F41A"/><rect x="321" y="684.5" width="8" height="4.5" rx="0" fill="#138A13"/><rect x="338" y="684.5" width="8" height="4.5" rx="0" fill="#F4F41A"/><rect x="366" y="684.5" width="6" height="4.5" rx="0" fill="#F4F41A"/><rect x="380" y="684.5" width="9" height="4.5" rx="0" fill="#138A13"/><rect x="448" y="684.5" width="8" height="4.5" rx="0" fill="#138A13"/><rect x="462" y="684.5" width="3" height="4.5" rx="0" fill="#BEBEBE"/><rect x="468" y="684.5" width="8" height="4.5" rx="0" fill="#138A13"/><rect x="536" y="684.5" width="32" height="4.5" rx="0" fill="#138A13"/><rect x="548" y="684.5" width="12" height="4.5" rx="0" fill="#C8B070"/><rect x="579" y="684.5" width="8" height="4.5" rx="0" fill="#C8C8C8"/><rect x="596" y="684.5" width="5" height="4.5" rx="0" fill="#BEBEBE"/><rect x="606" y="684.5" width="5" height="4.5" rx="0" fill="#BEBEBE"/><rect x="640" y="684.5" width="7" height="4.5" rx="0" fill="#F4F41A"/><rect x="648" y="684.5" width="19" height="4.5" rx="0" fill="#F4F41A"/></svg>
<div style="position:absolute;left:101px;top:178px;width:60px;height:326px;background:#8DB2E6;border-radius:7px 7px 0 0"></div><div style="position:absolute;left:101px;top:179px;width:60px;height:28px;background:linear-gradient(#8FB2EE 0px,#4A6CB0 1.5px,#5382C2 13px,#6CA0DA 14px,#8EC4EA 27px,#7099C8 28px);border-radius:7px 7px 0 0"></div><div style="position:absolute;left:105px;top:207px;width:60px;height:292px;background:#EBE9ED"></div><svg style="position:absolute;left:107px;top:186px" width="16" height="16"><rect x="0" y="0" width="16" height="16" fill="#7E4C12"/><rect x="0.5" y="0.5" width="15" height="15" fill="none" stroke="#4E2E0A"/><rect x="1.0" y="1" width="1" height="1" fill="#FFF2C2"/><rect x="2.0" y="1" width="1" height="1" fill="#FFF2C2"/><rect x="3.0" y="1" width="1" height="1" fill="#FFF2C2"/><rect x="1.0" y="2" width="1" height="1" fill="#FFF2C2"/><rect x="3.0" y="2" width="1" height="1" fill="#FFF2C2"/><rect x="1.0" y="3" width="1" height="1" fill="#FFF2C2"/><rect x="2.0" y="3" width="1" height="1" fill="#FFF2C2"/><rect x="3.0" y="3" width="1" height="1" fill="#FFF2C2"/><rect x="1.0" y="4" width="1" height="1" fill="#FFF2C2"/><rect x="1.0" y="5" width="1" height="1" fill="#FFF2C2"/><rect x="5.6" y="1" width="1" height="1" fill="#FFF2C2"/><rect x="4.6" y="2" width="1" height="1" fill="#FFF2C2"/><rect x="6.6" y="2" width="1" height="1" fill="#FFF2C2"/><rect x="4.6" y="3" width="1" height="1" fill="#FFF2C2"/><rect x="5.6" y="3" width="1" height="1" fill="#FFF2C2"/><rect x="6.6" y="3" width="1" height="1" fill="#FFF2C2"/><rect x="4.6" y="4" width="1" height="1" fill="#FFF2C2"/><rect x="6.6" y="4" width="1" height="1" fill="#FFF2C2"/><rect x="4.6" y="5" width="1" height="1" fill="#FFF2C2"/><rect x="6.6" y="5" width="1" height="1" fill="#FFF2C2"/><rect x="8.2" y="1" width="1" height="1" fill="#FFF2C2"/><rect x="9.2" y="1" width="1" height="1" fill="#FFF2C2"/><rect x="8.2" y="2" width="1" height="1" fill="#FFF2C2"/><rect x="10.2" y="2" width="1" height="1" fill="#FFF2C2"/><rect x="8.2" y="3" width="1" height="1" fill="#FFF2C2"/><rect x="10.2" y="3" width="1" height="1" fill="#FFF2C2"/><rect x="8.2" y="4" width="1" height="1" fill="#FFF2C2"/><rect x="10.2" y="4" width="1" height="1" fill="#FFF2C2"/><rect x="8.2" y="5" width="1" height="1" fill="#FFF2C2"/><rect x="9.2" y="5" width="1" height="1" fill="#FFF2C2"/><rect x="11.8" y="1" width="1" height="1" fill="#FFF2C2"/><rect x="12.8" y="1" width="1" height="1" fill="#FFF2C2"/><rect x="13.8" y="1" width="1" height="1" fill="#FFF2C2"/><rect x="11.8" y="2" width="1" height="1" fill="#FFF2C2"/><rect x="11.8" y="3" width="1" height="1" fill="#FFF2C2"/><rect x="12.8" y="3" width="1" height="1" fill="#FFF2C2"/><rect x="13.8" y="3" width="1" height="1" fill="#FFF2C2"/><rect x="13.8" y="4" width="1" height="1" fill="#FFF2C2"/><rect x="11.8" y="5" width="1" height="1" fill="#FFF2C2"/><rect x="12.8" y="5" width="1" height="1" fill="#FFF2C2"/><rect x="13.8" y="5" width="1" height="1" fill="#FFF2C2"/><rect x="1.5" y="7.5" width="13" height="6" fill="#1A3A10" stroke="#8CD848"/><rect x="4" y="9" width="2" height="4" fill="#3CC03C"/><rect x="10" y="9" width="2" height="4" fill="#3CC03C"/><rect x="7" y="9" width="2" height="3" fill="#5A8A30"/><rect x="4" y="14" width="3" height="1" fill="#E8C040"/><rect x="9" y="14" width="3" height="1" fill="#E8C040"/></svg><div style="position:absolute;left:126px;top:189px;font:bold 12.5px/13px 'Liberation Sans';color:#F2F6FE;-webkit-text-stroke:0.3px #F2F6FE">Del</div><div class="grp" style="left:113px;top:222px;width:60px;height:238px"></div><div class="t" style="left:122px;top:217px;color:#3A5A96;background:#EBE9ED;padding:0 2px;left:120px">CAM</div><div class="t" style="left:120px;top:233px;color:#000;">D<u>o</u>cu</div><div class="ed" style="left:122px;top:250px;width:60px;height:80px;border-color:#A7A6AA"></div><div class="t" style="left:127px;top:253px;color:#000;">TS</div><div class="t" style="left:127px;top:266px;color:#000;">BS</div><div class="t" style="left:127px;top:279px;color:#000;">DD</div><div class="t" style="left:127px;top:292px;color:#000;">NC</div><div style="position:absolute;left:124px;top:304px;width:40px;height:13px;background:#316AC5"></div><div class="t" style="left:127px;top:305px;color:#fff;">TPN</div><div class="t" style="left:127px;top:318px;color:#000;">BPN</div><div class="t" style="left:123px;top:366px;color:#000;">Sum</div><div class="ed" style="left:122px;top:383px;width:60px;height:73px;border-color:#A7A6AA"></div><div class="t" style="left:126px;top:386px;color:#000;">Pas</div><div class="t" style="left:126px;top:399px;color:#000;">Top</div><div class="t" style="left:126px;top:412px;color:#000;">Lay</div><div class="t" style="left:114px;top:477px;color:#000;">CAM D</div><div style="position:absolute;left:143px;top:0px;width:600px;height:683px;background:linear-gradient(90deg,#7FA6DE 0px,#9CC0EE 1.5px,#8DB4E8 3px);border-radius:6px 6px 0 0"></div><div style="position:absolute;left:143px;top:0px;width:600px;height:28px;background:linear-gradient(#8FB2EE 0px,#8FB2EE 1px,#4A6CB0 1.5px,#5382C2 13px,#6CA0DA 14px,#8EC4EA 26.5px,#7099C8 27px,#7099C8 28px);border-radius:6px 6px 0 0"></div><div style="position:absolute;left:146px;top:28px;width:600px;height:652px;background:#EBE9ED"></div><svg style="position:absolute;left:148px;top:6px" width="16" height="16"><rect x="0" y="0" width="16" height="16" fill="#7E4C12"/><rect x="0.5" y="0.5" width="15" height="15" fill="none" stroke="#4E2E0A"/><rect x="1.0" y="1" width="1" height="1" fill="#FFF2C2"/><rect x="2.0" y="1" width="1" height="1" fill="#FFF2C2"/><rect x="3.0" y="1" width="1" height="1" fill="#FFF2C2"/><rect x="1.0" y="2" width="1" height="1" fill="#FFF2C2"/><rect x="3.0" y="2" width="1" height="1" fill="#FFF2C2"/><rect x="1.0" y="3" width="1" height="1" fill="#FFF2C2"/><rect x="2.0" y="3" width="1" height="1" fill="#FFF2C2"/><rect x="3.0" y="3" width="1" height="1" fill="#FFF2C2"/><rect x="1.0" y="4" width="1" height="1" fill="#FFF2C2"/><rect x="1.0" y="5" width="1" height="1" fill="#FFF2C2"/><rect x="5.6" y="1" width="1" height="1" fill="#FFF2C2"/><rect x="4.6" y="2" width="1" height="1" fill="#FFF2C2"/><rect x="6.6" y="2" width="1" height="1" fill="#FFF2C2"/><rect x="4.6" y="3" width="1" height="1" fill="#FFF2C2"/><rect x="5.6" y="3" width="1" height="1" fill="#FFF2C2"/><rect x="6.6" y="3" width="1" height="1" fill="#FFF2C2"/><rect x="4.6" y="4" width="1" height="1" fill="#FFF2C2"/><rect x="6.6" y="4" width="1" height="1" fill="#FFF2C2"/><rect x="4.6" y="5" width="1" height="1" fill="#FFF2C2"/><rect x="6.6" y="5" width="1" height="1" fill="#FFF2C2"/><rect x="8.2" y="1" width="1" height="1" fill="#FFF2C2"/><rect x="9.2" y="1" width="1" height="1" fill="#FFF2C2"/><rect x="8.2" y="2" width="1" height="1" fill="#FFF2C2"/><rect x="10.2" y="2" width="1" height="1" fill="#FFF2C2"/><rect x="8.2" y="3" width="1" height="1" fill="#FFF2C2"/><rect x="10.2" y="3" width="1" height="1" fill="#FFF2C2"/><rect x="8.2" y="4" width="1" height="1" fill="#FFF2C2"/><rect x="10.2" y="4" width="1" height="1" fill="#FFF2C2"/><rect x="8.2" y="5" width="1" height="1" fill="#FFF2C2"/><rect x="9.2" y="5" width="1" height="1" fill="#FFF2C2"/><rect x="11.8" y="1" width="1" height="1" fill="#FFF2C2"/><rect x="12.8" y="1" width="1" height="1" fill="#FFF2C2"/><rect x="13.8" y="1" width="1" height="1" fill="#FFF2C2"/><rect x="11.8" y="2" width="1" height="1" fill="#FFF2C2"/><rect x="11.8" y="3" width="1" height="1" fill="#FFF2C2"/><rect x="12.8" y="3" width="1" height="1" fill="#FFF2C2"/><rect x="13.8" y="3" width="1" height="1" fill="#FFF2C2"/><rect x="13.8" y="4" width="1" height="1" fill="#FFF2C2"/><rect x="11.8" y="5" width="1" height="1" fill="#FFF2C2"/><rect x="12.8" y="5" width="1" height="1" fill="#FFF2C2"/><rect x="13.8" y="5" width="1" height="1" fill="#FFF2C2"/><rect x="1.5" y="7.5" width="13" height="6" fill="#1A3A10" stroke="#8CD848"/><rect x="4" y="9" width="2" height="4" fill="#3CC03C"/><rect x="10" y="9" width="2" height="4" fill="#3CC03C"/><rect x="7" y="9" width="2" height="3" fill="#5A8A30"/><rect x="4" y="14" width="3" height="1" fill="#E8C040"/><rect x="9" y="14" width="3" height="1" fill="#E8C040"/></svg><div style="position:absolute;left:167px;top:9px;font:bold 12px/13px 'Liberation Sans';color:#F4F8FF;letter-spacing:-0.1px;-webkit-text-stroke:0.3px #F4F8FF">Drill Drawing Options</div><div style="position:absolute;left:666px;top:4px;width:30px;height:19px;border:1px solid #3A5DA8;border-radius:3px;background:linear-gradient(#A6C1F0,#5F8AD4 40%,#6E9BE0)"></div><svg style="position:absolute;left:670px;top:8px" width="12" height="13"><path d="M1.5 1.5 L11 11.5 M11 1.5 L1.5 11.5" stroke="#F0FAFF" stroke-width="2.2"/></svg><div class="grp" style="left:154px;top:34px;width:444px;height:84px"></div><div class="t glab" style="left:161px;top:29px;padding:0 2px">Drill chart</div><div style="position:absolute;left:163px;top:50px;width:11px;height:11px;border:1px solid #2A3F5A;background:linear-gradient(135deg,#DCDCD7,#FFFFFF)"></div><svg style="position:absolute;left:163px;top:50px" width="13" height="13"><path d="M3 6.2 L5.4 8.8 L10 3.8" stroke="#21A121" stroke-width="2" fill="none"/></svg><div class="t" style="left:179px;top:51px;color:#000;">Dra<u>w</u> chart</div><div class="t" style="left:163px;top:68px;color:#000;"><u>L</u>etter height:</div><div class="ed" style="left:163px;top:85px;width:81px;height:18px"></div><div class="t" style="left:166px;top:89px;color:#000;">3.048</div><div class="t" style="left:262px;top:68px;color:#000;"><u>C</u>hart line width:</div><div class="ed" style="left:260px;top:85px;width:81px;height:18px"></div><div class="t" style="left:263px;top:89px;color:#000;">0.254</div><div class="t" style="left:410px;top:68px;color:#000;">Location:</div><div class="t" style="left:385px;top:86px;color:#000;"><u>X</u>:</div><div class="ed" style="left:410px;top:85px;width:66px;height:18px"></div><div class="t" style="left:413px;top:89px;color:#000;">0</div><div class="t" style="left:493px;top:86px;color:#000;"><u>Y</u>:</div><div class="ed" style="left:511px;top:85px;width:73px;height:18px"></div><div class="t" style="left:514px;top:89px;color:#000;">0</div><div class="btn" style="left:611px;top:39px;width:64px;height:19px"></div><div class="t bt" style="left:611px;top:44px;width:66px">OK</div><div class="btn" style="left:611px;top:70px;width:64px;height:19px"></div><div class="t bt" style="left:611px;top:75px;width:66px">Cancel</div><div class="btn" style="left:611px;top:99px;width:64px;height:19px"></div><div class="t bt" style="left:611px;top:104px;width:66px"><u>H</u>elp</div><div class="grp" style="left:152px;top:132px;width:606px;height:505px"></div><div class="t glab" style="left:160px;top:127px;padding:0 2px">Drill data</div><div class="grp" style="left:164px;top:150px;width:506px;height:71px"></div><div class="t glab" style="left:171px;top:144px;padding:0 2px">Drill symbol markers</div><div class="t" style="left:174px;top:161px;color:#000;">Tip: These are global settings. You cannot set them per symbol.</div><div class="t" style="left:173px;top:178px;color:#000;">H<u>e</u>ight(letter):</div><div class="ed" style="left:173px;top:194px;width:73px;height:18px"></div><div class="t" style="left:176px;top:198px;color:#000;">1.27</div><div class="t" style="left:269px;top:178px;color:#000;">L<u>i</u>ne width:</div><div class="ed" style="left:268px;top:194px;width:72px;height:18px"></div><div class="t" style="left:271px;top:198px;color:#000;">0.254</div><div class="t" style="left:352px;top:178px;color:#000;">Height(symbol):</div><div class="ed" style="left:352px;top:194px;width:72px;height:18px"></div><div class="t" style="left:355px;top:198px;color:#000;">2.032</div><div style="position:absolute;left:436px;top:198px;width:11px;height:11px;border:1px solid #2A3F5A;background:linear-gradient(135deg,#DCDCD7,#FFFFFF)"></div><div class="t" style="left:452px;top:199px;color:#000;">Show Through/<u>P</u>artial column</div><div style="position:absolute;left:617px;top:165px;width:45px;height:49px;background:#000"></div><div style="position:absolute;left:628px;top:187px;width:24px;height:5px;background:#fff"></div><div style="position:absolute;left:637px;top:178px;width:6px;height:24px;background:#fff"></div><div class="t" style="left:181px;top:239px;color:#000;">Drill size <u>u</u>nits:</div><div class="ed" style="left:254px;top:234px;width:66px;height:19px"></div><div class="t" style="left:259px;top:239px;color:#000;">Metric</div><div style="position:absolute;left:304px;top:235px;width:15px;height:17px;border:1px solid #A4ACBC;border-radius:1px;background:linear-gradient(#ECF2FC,#D2DEF4 60%,#BCCDEB)"></div><svg style="position:absolute;left:304px;top:235px" width="17" height="19"><path d="M4.5 7.5 L8.5 11.5 L12.5 7.5" stroke="#34465E" stroke-width="2.2" fill="none"/></svg><div class="t" style="left:335px;top:239px;color:#000;">Default <u>t</u>olerance:</div><div class="ed" style="left:427px;top:234px;width:171px;height:19px"></div><div class="t" style="left:430px;top:238px;color:#000;">+/-0.0</div><div class="t" style="left:182px;top:263px;color:#000;">Tip: Click Regenerate to automatically read drill data from the design. Then set the</div><div class="t" style="left:202px;top:276px;color:#000;">symbol and tolerance. You cannot change the size, quantity or plated status.</div><div class="t" style="left:202px;top:296px;color:#000;">Click Augment to update an existing table with data from the design.</div><div class="t" style="left:202px;top:314px;color:#000;">Click Add Plated or Add NonPlated to manually add a new drill size.</div><div style="position:absolute;left:164px;top:335px;width:503px;height:208px;background:#fff;border-top:1px solid #000;border-left:1px solid #8A8A8A;border-right:1px solid #A0A0A0;border-bottom:1px solid #8A8A8A"></div><div style="position:absolute;left:164px;top:335px;width:1px;height:19px;background:#000"></div><div style="position:absolute;left:261px;top:337px;width:1px;height:16px;background:#D4D0C8"></div><div style="position:absolute;left:333px;top:337px;width:1px;height:16px;background:#D4D0C8"></div><div style="position:absolute;left:405px;top:337px;width:1px;height:16px;background:#D4D0C8"></div><div style="position:absolute;left:468px;top:337px;width:1px;height:16px;background:#D4D0C8"></div><div style="position:absolute;left:648px;top:337px;width:1px;height:16px;background:#D4D0C8"></div><div style="position:absolute;left:165px;top:353px;width:503px;height:1px;background:#D8D6DC"></div><div class="t" style="left:165px;top:340px;width:96px;text-align:center;color:#000">Symbol</div><div class="t" style="left:268px;top:340px;color:#000">Size</div><div class="t" style="left:334px;top:340px;width:66px;text-align:right">Quantity</div><div class="t" style="left:406px;top:340px;width:62px;text-align:center;color:#000">Plated</div><div class="t" style="left:475px;top:340px;color:#000">Tolerance</div><div style="position:absolute;left:165px;top:355px;width:486px;height:18px;background:#3161B5;border-top:1px solid #40628F;border-bottom:1px solid #40628F"></div><div style="position:absolute;left:165px;top:375px;width:486px;height:1px;background:#C8C8C8"></div><div class="t" style="left:165px;top:360px;width:96px;text-align:center;color:#fff">+</div><div class="t" style="left:268px;top:360px;color:#E8F0FF">0.2032</div><div class="t" style="left:334px;top:360px;width:66px;text-align:right;color:#fff">1317</div><div class="t" style="left:406px;top:360px;width:62px;text-align:center;color:#fff">Yes</div><div class="t" style="left:475px;top:360px;color:#fff">+/-0.0</div><div style="position:absolute;left:165px;top:396px;width:486px;height:1px;background:#C8C8C8"></div><div class="t" style="left:165px;top:381px;width:96px;text-align:center;color:#000">x</div><div class="t" style="left:268px;top:381px;color:#000">1</div><div class="t" style="left:334px;top:381px;width:66px;text-align:right;color:#000">10</div><div class="t" style="left:406px;top:381px;width:62px;text-align:center;color:#000">Yes</div><div class="t" style="left:475px;top:381px;color:#000">+/-0.0</div><div style="position:absolute;left:165px;top:417px;width:486px;height:1px;background:#C8C8C8"></div><div class="t" style="left:165px;top:402px;width:96px;text-align:center;color:#000">Rectangle</div><div class="t" style="left:268px;top:402px;color:#000">1.016</div><div class="t" style="left:334px;top:402px;width:66px;text-align:right;color:#000">6</div><div class="t" style="left:406px;top:402px;width:62px;text-align:center;color:#000">Yes</div><div class="t" style="left:475px;top:402px;color:#000">+/-0.0</div><div style="position:absolute;left:165px;top:438px;width:486px;height:1px;background:#C8C8C8"></div><div class="t" style="left:165px;top:423px;width:96px;text-align:center;color:#000">Diamond</div><div class="t" style="left:268px;top:423px;color:#000">1.2</div><div class="t" style="left:334px;top:423px;width:66px;text-align:right;color:#000">2</div><div class="t" style="left:406px;top:423px;width:62px;text-align:center;color:#000">Yes</div><div class="t" style="left:475px;top:423px;color:#000">+/-0.0</div><div style="position:absolute;left:165px;top:459px;width:486px;height:1px;background:#C8C8C8"></div><div class="t" style="left:165px;top:444px;width:96px;text-align:center;color:#000">Hour Glass</div><div class="t" style="left:268px;top:444px;color:#000">0.9 x 2.7</div><div class="t" style="left:334px;top:444px;width:66px;text-align:right;color:#000">3</div><div class="t" style="left:406px;top:444px;width:62px;text-align:center;color:#000">Yes</div><div class="t" style="left:475px;top:444px;color:#000">+/-0.0</div><div style="position:absolute;left:165px;top:480px;width:486px;height:1px;background:#C8C8C8"></div><div class="t" style="left:165px;top:465px;width:96px;text-align:center;color:#000">Bow Tie</div><div class="t" style="left:268px;top:465px;color:#000">0.3048</div><div class="t" style="left:334px;top:465px;width:66px;text-align:right;color:#000">12</div><div class="t" style="left:406px;top:465px;width:62px;text-align:center;color:#000">Yes</div><div class="t" style="left:475px;top:465px;color:#000">+/-0.0</div><div style="position:absolute;left:165px;top:501px;width:486px;height:1px;background:#C8C8C8"></div><div class="t" style="left:165px;top:486px;width:96px;text-align:center;color:#000">+A</div><div class="t" style="left:268px;top:486px;color:#000">0.8</div><div class="t" style="left:334px;top:486px;width:66px;text-align:right;color:#000">4</div><div class="t" style="left:406px;top:486px;width:62px;text-align:center;color:#000">Yes</div><div class="t" style="left:475px;top:486px;color:#000">+/-0.0</div><div style="position:absolute;left:165px;top:522px;width:486px;height:1px;background:#C8C8C8"></div><div class="t" style="left:165px;top:507px;width:96px;text-align:center;color:#000">+B</div><div class="t" style="left:268px;top:507px;color:#000">0.508</div><div class="t" style="left:334px;top:507px;width:66px;text-align:right;color:#000">79</div><div class="t" style="left:406px;top:507px;width:62px;text-align:center;color:#000">Yes</div><div class="t" style="left:475px;top:507px;color:#000">+/-0.0</div><div style="position:absolute;left:165px;top:543px;width:486px;height:1px;background:#C8C8C8"></div><div class="t" style="left:165px;top:528px;width:96px;text-align:center;color:#000">+C</div><div class="t" style="left:268px;top:528px;color:#000">1.65</div><div class="t" style="left:334px;top:528px;width:66px;text-align:right;color:#000">2</div><div class="t" style="left:406px;top:528px;width:62px;text-align:center;color:#000">Yes</div><div class="t" style="left:475px;top:528px;color:#000">+/-0.0</div><div style="position:absolute;left:261px;top:355px;width:1px;height:189px;background:#C8C8C8;opacity:.9"></div><div style="position:absolute;left:333px;top:355px;width:1px;height:189px;background:#C8C8C8;opacity:.9"></div><div style="position:absolute;left:405px;top:355px;width:1px;height:189px;background:#C8C8C8;opacity:.9"></div><div style="position:absolute;left:468px;top:355px;width:1px;height:189px;background:#C8C8C8;opacity:.9"></div><div style="position:absolute;left:648px;top:355px;width:1px;height:189px;background:#C8C8C8;opacity:.9"></div><div style="position:absolute;left:652px;top:354px;width:16px;height:190px;background:linear-gradient(90deg,#EEF2FB,#FBFCFE 60%,#E6ECF8)"></div><div style="position:absolute;left:652px;top:355px;width:14px;height:14px;border:1px solid #95A5C5;border-radius:2px;background:linear-gradient(#F2F6FD,#D6E2F6 60%,#C4D3EE)"></div><svg style="position:absolute;left:652px;top:355px" width="16" height="16"><path d="M4 10 L8 6 L12 10" stroke="#4D6185" stroke-width="2" fill="none"/></svg><div style="position:absolute;left:652px;top:372px;width:14px;height:46px;border:1px solid #95A5C5;border-radius:2px;background:linear-gradient(90deg,#D2DFF7,#EEF4FD 50%,#D0DDF5)"></div><div style="position:absolute;left:656px;top:393px;width:7px;height:1px;background:#7A8AA8"></div><div style="position:absolute;left:656px;top:395px;width:7px;height:1px;background:#7A8AA8"></div><div style="position:absolute;left:656px;top:397px;width:7px;height:1px;background:#7A8AA8"></div><div style="position:absolute;left:656px;top:399px;width:7px;height:1px;background:#7A8AA8"></div><div style="position:absolute;left:652px;top:527px;width:14px;height:15px;border:1px solid #95A5C5;border-radius:2px;background:linear-gradient(#F2F6FD,#D6E2F6 60%,#C4D3EE)"></div><svg style="position:absolute;left:652px;top:527px" width="16" height="17"><path d="M4 7 L8 11 L12 7" stroke="#4D6185" stroke-width="2" fill="none"/></svg><div class="btn" style="left:182px;top:569px;width:71px;height:19px"></div><div class="t bt" style="left:182px;top:574px;width:73px"><u>A</u>dd Plated</div><div class="btn" style="left:278px;top:569px;width:71px;height:19px"></div><div class="t bt" style="left:278px;top:574px;width:73px">Add <u>N</u>onPltd.</div><div class="btn" style="left:372px;top:569px;width:71px;height:19px"></div><div class="t bt" style="left:372px;top:574px;width:73px"><u>D</u>elete</div><div class="btn" style="left:467px;top:569px;width:71px;height:19px"></div><div class="t bt" style="left:467px;top:574px;width:73px">Aug<u>m</u>ent</div><div class="btn" style="left:560px;top:569px;width:71px;height:19px"></div><div class="t bt" style="left:560px;top:574px;width:73px"><u>R</u>egenerate</div><div class="t" style="left:182px;top:601px;color:#000;">Tip:</div><div class="t" style="left:202px;top:601px;color:#000;">Click the column headings on the Size, Quantity or Plated columns to sort the</div><div class="t" style="left:202px;top:614px;color:#000;">table in the desired order</div><div class="t" style="left:182px;top:646px;color:#000;">Tip:</div><div class="t" style="left:202px;top:646px;color:#000;">Use the Save As Defaults button to save the current settings as the</div><div class="t" style="left:202px;top:659px;color:#000;">defaults for all the CAM documents of the Drill Drawing type.</div><div class="btn" style="left:572px;top:651px;width:101px;height:19px"></div><div class="t bt" style="left:572px;top:656px;width:103px"><u>S</u>ave As Defaults</div><div style="position:absolute;left:286px;top:330px;font:bold 31px/31px 'Liberation Sans';color:#D0D0D0;-webkit-text-stroke:1.5px #A4A4A4;letter-spacing:-0.5px">Discuz!</div>
</body></html>
